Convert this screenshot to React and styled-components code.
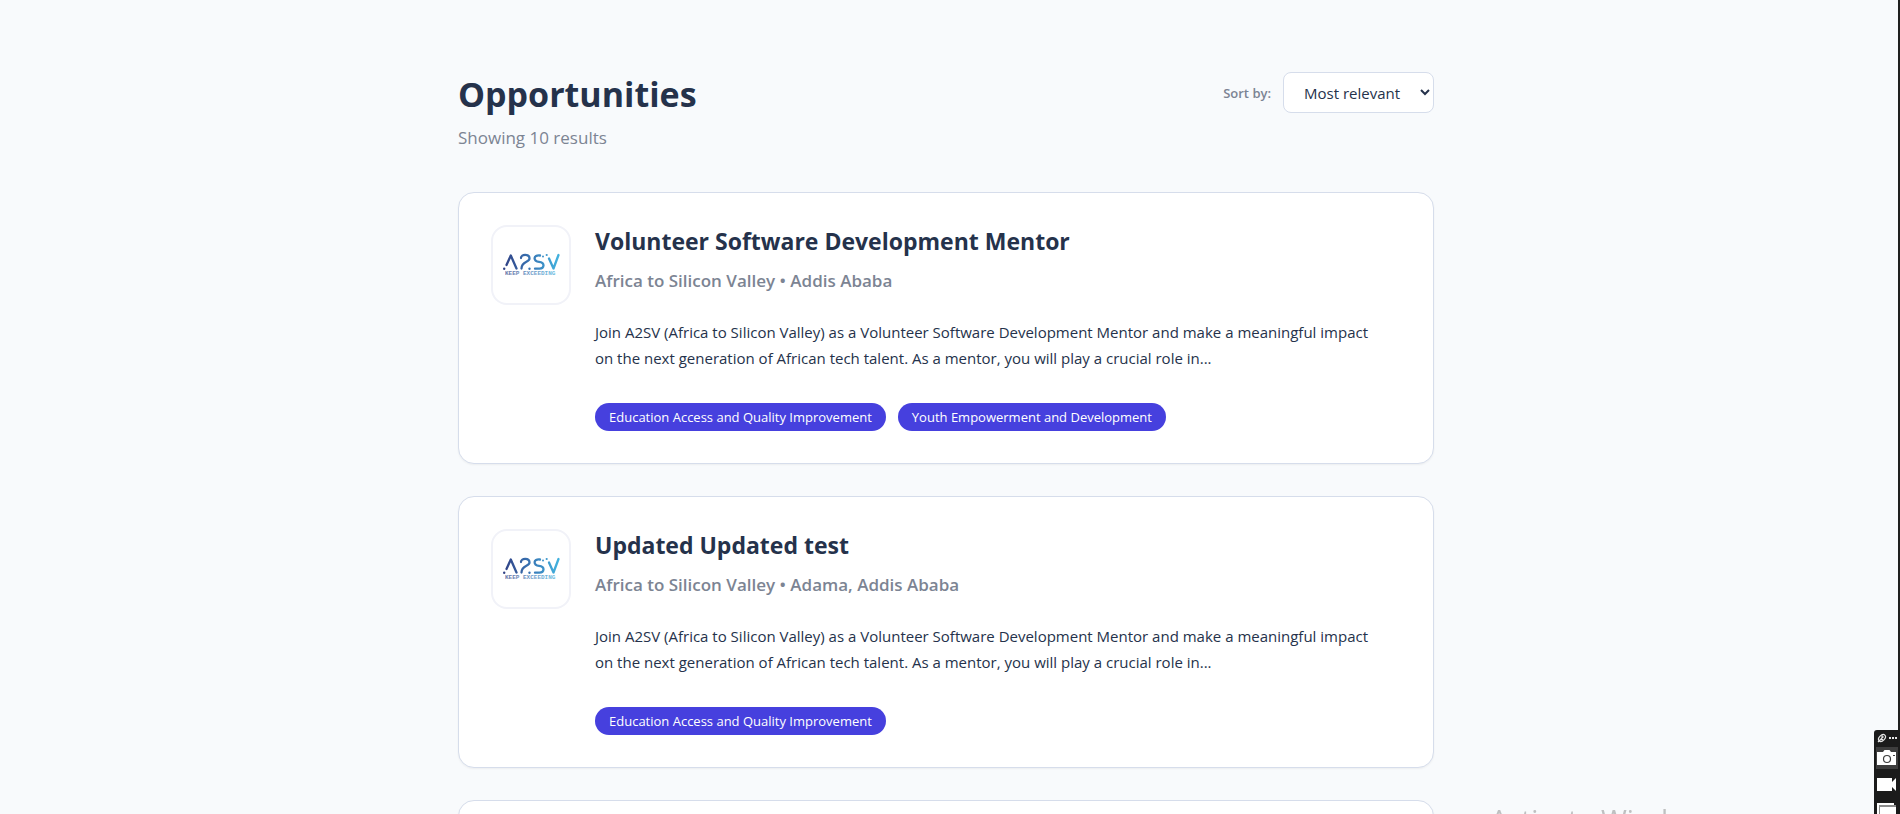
import React from "react";
import styled, { createGlobalStyle } from "styled-components";

const GlobalStyle = createGlobalStyle`
  *, *::before, *::after { box-sizing: border-box; }
  body {
    margin: 0;
    background: #f8fafc;
    color: #25324b;
    font-family: "Segoe UI", "Open Sans", "Noto Sans", sans-serif;
  }
`;

const Page = styled.div`
  height: 100vh;
  overflow: hidden;
  padding: 72px 6px 0 0;
  border-right: 2px solid #1f1f1f;
`;

const Container = styled.main`
  max-width: 1024px;
  margin: 0 auto;
  padding: 0 24px;
`;

const Header = styled.header`
  display: flex;
  justify-content: space-between;
  align-items: flex-start;
  margin-bottom: 40px;
`;

const Heading = styled.h1`
  margin: 0 0 8px;
  font-size: 34px;
  line-height: 44px;
  font-weight: 700;
`;

const ResultCount = styled.p`
  margin: 0;
  font-size: 17px;
  line-height: 28px;
  color: #7c8493;
`;

const SortControl = styled.div`
  display: flex;
  align-items: center;
  gap: 12px;
`;

const SortLabel = styled.label`
  font-size: 13px;
  font-weight: 600;
  color: #7c8493;
`;

const SortSelect = styled.select`
  width: 151px;
  height: 41px;
  padding: 0 0 0 16px;
  border: 1px solid #d6ddeb;
  border-radius: 8px;
  background: #ffffff;
  color: #25324b;
  font-family: inherit;
  font-size: 15px;
`;

const CardList = styled.div`
  display: flex;
  flex-direction: column;
  gap: 32px;
`;

const Card = styled.article`
  display: flex;
  align-items: flex-start;
  gap: 24px;
  min-height: 272px;
  padding: 32px;
  border: 1px solid #d6ddeb;
  border-radius: 16px;
  background: #ffffff;
  box-shadow: 0 1px 2px rgba(0, 0, 0, 0.05);
`;

const LogoFrame = styled.div`
  flex: none;
  width: 80px;
  height: 80px;
  border: 2px solid #f1f2f8;
  border-radius: 16px;
  overflow: hidden;

  svg { display: block; width: 100%; height: 100%; }
`;

const CardBody = styled.div`
  flex: 1;
  min-width: 0;
  padding-right: 16px;
`;

const CardTitle = styled.h2`
  margin: 0 0 10px;
  font-size: 23px;
  line-height: 32px;
  font-weight: 700;
`;

const CardMeta = styled.p`
  margin: 0 0 24px;
  font-size: 17px;
  line-height: 28px;
  font-weight: 600;
  color: #7c8493;
`;

const Description = styled.p`
  margin: 0 0 32px;
  font-size: 15px;
  line-height: 26px;
`;

const TagRow = styled.div`
  display: flex;
  flex-wrap: wrap;
  gap: 12px;
`;

const Tag = styled.span`
  padding: 0 14px;
  border-radius: 14px;
  background: #4640de;
  color: #ffffff;
  font-size: 13px;
  line-height: 28px;
  font-weight: 500;
`;

const Watermark = styled.div`
  position: fixed;
  right: 180px;
  bottom: -25px;
  font-size: 28px;
  line-height: 40px;
  color: #bfc0c1;
`;

const CaptureBar = styled.div`
  position: fixed;
  right: 0;
  bottom: 0;
  width: 26px;
  height: 84px;

  svg { display: block; }
`;

const DESCRIPTION =
  "Join A2SV (Africa to Silicon Valley) as a Volunteer Software Development Mentor and make a meaningful impact on the next generation of African tech talent. As a mentor, you will play a crucial role in...";

const OPPORTUNITIES = [
  {
    title: "Volunteer Software Development Mentor",
    meta: "Africa to Silicon Valley • Addis Ababa",
    tags: ["Education Access and Quality Improvement", "Youth Empowerment and Development"],
  },
  {
    title: "Updated Updated test",
    meta: "Africa to Silicon Valley • Adama, Addis Ababa",
    tags: ["Education Access and Quality Improvement"],
  },
];

function CompanyLogo({ id }) {
  const paint = `url(#${id})`;
  return (
    <svg viewBox="2 2 76 76" role="img" aria-label="A2SV logo">
      <defs>
        <linearGradient id={id} gradientUnits="userSpaceOnUse" x1="12" y1="0" x2="68" y2="0">
          <stop offset="0" stopColor="#303f83" />
          <stop offset="0.5" stopColor="#3976b5" />
          <stop offset="1" stopColor="#42b3df" />
        </linearGradient>
      </defs>
      <g fill="none" stroke={paint} strokeWidth="2.3" strokeLinecap="round" strokeLinejoin="round">
        <path d="M15.5 40 L19.8 30.5 L25.5 43.5" />
        <path d="M30 33 C30 28.8 38.5 28.8 38.5 33.5 C38.5 37.5 30.5 36 30.5 43.5" />
        <path d="M49 30.5 C42 29.5 42 36.5 48 36.8 C54.5 37.2 53.5 44 48 43.7 H44" />
        <path d="M58 33.5 L62.5 43.5 L67.5 30" />
      </g>
      <g fill={paint}>
        <circle cx="13.2" cy="43.8" r="1.2" />
        <circle cx="38.5" cy="43.8" r="1.2" />
        <circle cx="52" cy="31.5" r="1" />
        <circle cx="55.7" cy="30" r="1.1" />
      </g>
      <text
        x="14"
        y="50"
        fontFamily="'Liberation Mono', monospace"
        fontSize="6"
        fontWeight="700"
        fill={paint}
        opacity="0.75"
      >
        KEEP EXCEEDING
      </text>
    </svg>
  );
}

function CaptureIcons() {
  return (
    <svg width="26" height="84" viewBox="0 0 26 84" aria-hidden="true">
      <path d="M0 84 V3 Q0 0 3 0 H26 V84 Z" fill="#1b1b1b" />
      <g fill="none" stroke="#e6e6e6" strokeWidth="1.2">
        <ellipse cx="8" cy="8" rx="4" ry="2.7" transform="rotate(-45 8 8)" />
        <path d="M4 12 L9.5 6.5 M6 9.5 H9 M8 8 V5" />
      </g>
      <path d="M15 7h2v2h-2z M18 7h2v2h-2z M21 7h2v2h-2z" fill="#e6e6e6" />
      <path d="M2 17h22v22H2z" fill="#3d3d3d" />
      <path d="M3 22h6l1.5-2h5l1.5 2h5v13H3z" fill="#ffffff" />
      <circle cx="13" cy="29" r="3.5" fill="#ffffff" stroke="#3d3d3d" strokeWidth="1.2" />
      <path d="M19 25h2v1h-2z" fill="#3d3d3d" />
      <path d="M3 48h15v4l4-4v13l-4-4v4H3z" fill="#ffffff" />
      <path d="M3 73h17v2H6v9H3z" fill="#ffffff" />
      <path d="M5 84V75h17v9z" fill="#8c8c8c" />
      <path d="M6 84V77h16v7z" fill="#ffffff" />
    </svg>
  );
}

function OpportunityCard({ item, logoId }) {
  return (
    <Card>
      <LogoFrame>
        <CompanyLogo id={logoId} />
      </LogoFrame>
      <CardBody>
        <CardTitle>{item.title}</CardTitle>
        <CardMeta>{item.meta}</CardMeta>
        <Description>{DESCRIPTION}</Description>
        <TagRow>
          {item.tags.map((tag) => (
            <Tag key={tag}>{tag}</Tag>
          ))}
        </TagRow>
      </CardBody>
    </Card>
  );
}

export default function App() {
  return (
    <>
      <GlobalStyle />
      <Page>
        <Container>
          <Header>
            <div>
              <Heading>Opportunities</Heading>
              <ResultCount>Showing 10 results</ResultCount>
            </div>
            <SortControl>
              <SortLabel htmlFor="sort">Sort by:</SortLabel>
              <SortSelect id="sort" defaultValue="relevant">
                <option value="relevant">Most relevant</option>
              </SortSelect>
            </SortControl>
          </Header>
          <CardList>
            {OPPORTUNITIES.map((item, index) => (
              <OpportunityCard key={item.title} item={item} logoId={`logo-${index}`} />
            ))}
            <Card />
          </CardList>
        </Container>
      </Page>
      <Watermark>Activate Windows</Watermark>
      <CaptureBar>
        <CaptureIcons />
      </CaptureBar>
    </>
  );
}
